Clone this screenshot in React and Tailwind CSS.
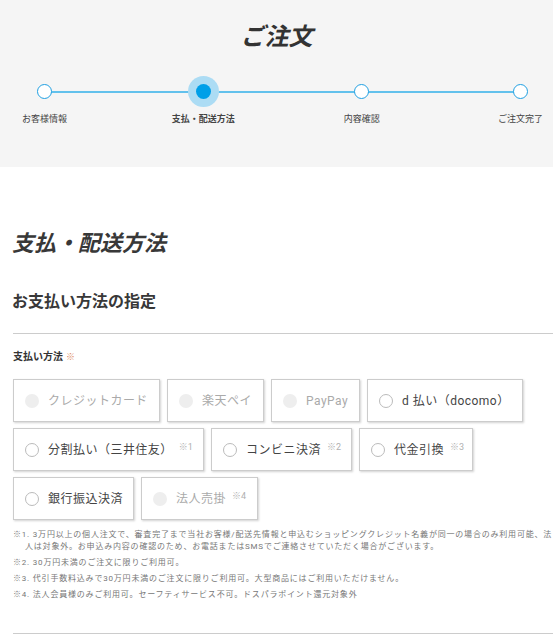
import React from 'react';

const font = { fontFamily: 'Roboto, "Noto Sans CJK JP", sans-serif' };

const steps = [
  { label: 'お客様情報' },
  { label: '支払・配送方法', active: true },
  { label: '内容確認' },
  { label: 'ご注文完了' },
];

const methods = [
  { label: 'クレジットカード', w: 'w-[147px]', disabled: true },
  { label: '楽天ペイ', w: 'w-[97px]', disabled: true },
  { label: 'PayPay', w: 'w-[89px]', disabled: true },
  { label: 'd 払い（docomo）', w: 'w-[156px]' },
  { label: '分割払い（三井住友）', w: 'w-[191px]', note: '※1' },
  { label: 'コンビニ決済', w: 'w-[141px]', note: '※2' },
  { label: '代金引換', w: 'w-[114px]', note: '※3' },
  { label: '銀行振込決済', w: 'w-[121px]' },
  { label: '法人売掛', w: 'w-[117px]', note: '※4', disabled: true },
];

const notes = [
  [
    '※1. 3万円以上の個人注文で、審査完了まで当社お客様/配送先情報と申込むショッピングクレジット名義が同一の場合のみ利用可能、法',
    '人は対象外。お申込み内容の確認のため、お電話またはSMSでご連絡させていただく場合がございます。',
  ],
  ['※2. 30万円未満のご注文に限りご利用可。'],
  ['※3. 代引手数料込みで30万円未満のご注文に限りご利用可。大型商品にはご利用いただけません。'],
  ['※4. 法人会員様のみご利用可。セーフティサービス不可。ドスパラポイント還元対象外'],
];

function Stepper() {
  return (
    <div className="relative ml-[37px] w-[491px] flex justify-between">
      <div className="absolute left-[7px] right-[7px] top-[7px] h-[2px] bg-[#62c1ec]" />
      {steps.map((s) => (
        <div key={s.label} className="relative flex flex-col items-center w-[15px]">
          {s.active ? (
            <div className="w-[15px] h-[15px] rounded-full bg-[#009fe8] shadow-[0_0_0_8px_#acdcf4]" />
          ) : (
            <div className="w-[15px] h-[15px] rounded-full bg-white border-[1.5px] border-[#20a0e2]" />
          )}
          <div
            className={`mt-[14px] whitespace-nowrap text-[9px] leading-[12px] text-[#444] ${
              s.active ? 'font-bold' : ''
            }`}
          >
            {s.label}
          </div>
        </div>
      ))}
    </div>
  );
}

function MethodButton({ m }) {
  return (
    <label
      className={`${m.w} h-[43px] flex items-center pl-[11px] border border-[#cccccc] bg-white shadow-[1px_1px_2px_rgba(0,0,0,0.18)]`}
    >
      {m.disabled ? (
        <span className="w-[14px] h-[14px] rounded-full bg-[#eeeeee] shrink-0" />
      ) : (
        <span className="w-[14px] h-[14px] rounded-full bg-white border border-[#bbbbbb] shrink-0" />
      )}
      <span
        className={`ml-[9px] whitespace-nowrap text-[12px] tracking-[0.04em] ${
          m.disabled ? 'text-[#aaaaaa]' : 'text-[#444444]'
        }`}
      >
        {m.label}
      </span>
      {m.note && (
        <span className="ml-[6px] -mt-[4px] text-[9px] text-[#b0b0b0] whitespace-nowrap">{m.note}</span>
      )}
    </label>
  );
}

export default function App() {
  return (
    <div className="w-[553px] min-h-[638px] bg-white overflow-hidden" style={font}>
      <div className="h-[167px] bg-[#f5f5f5] pt-[21px]">
        <h1 className="text-center text-[24px] leading-[32px] font-bold italic text-[#333]">ご注文</h1>
        <div className="mt-[31px]">
          <Stepper />
        </div>
      </div>

      <div className="pl-[13px]">
        <h2 className="mt-[62px] text-[22px] leading-[30px] font-bold italic text-[#383838] -ml-[1px]">
          支払・配送方法
        </h2>
        <h3 className="mt-[31px] text-[16px] leading-[24px] font-bold text-[#383838] -ml-[1px]">お支払い方法の指定</h3>
        <hr className="mt-[19px] border-t border-[#cccccc]" />

        <div className="mt-[16px] text-[10px] leading-[14px] font-bold text-[#333]">
          支払い方法<span className="ml-[3px] text-[9px] align-top text-[#dd8a5e]">※</span>
        </div>

        <div className="mt-[15px] flex flex-wrap gap-x-[7px] gap-y-[6px]">
          {methods.map((m) => (
            <MethodButton key={m.label} m={m} />
          ))}
        </div>

        <div className="mt-[9px] text-[8px] leading-[12px] tracking-[0.1em] text-[#777] space-y-[4px]">
          {notes.map((n, i) => (
            <p key={i} className="pl-[12px] -indent-[12px] whitespace-nowrap">
              {n[0]}
              {n[1] && (
                <>
                  <br />
                  {n[1]}
                </>
              )}
            </p>
          ))}
        </div>

        <hr className="mt-[32px] border-t border-[#cccccc]" />
      </div>
    </div>
  );
}
